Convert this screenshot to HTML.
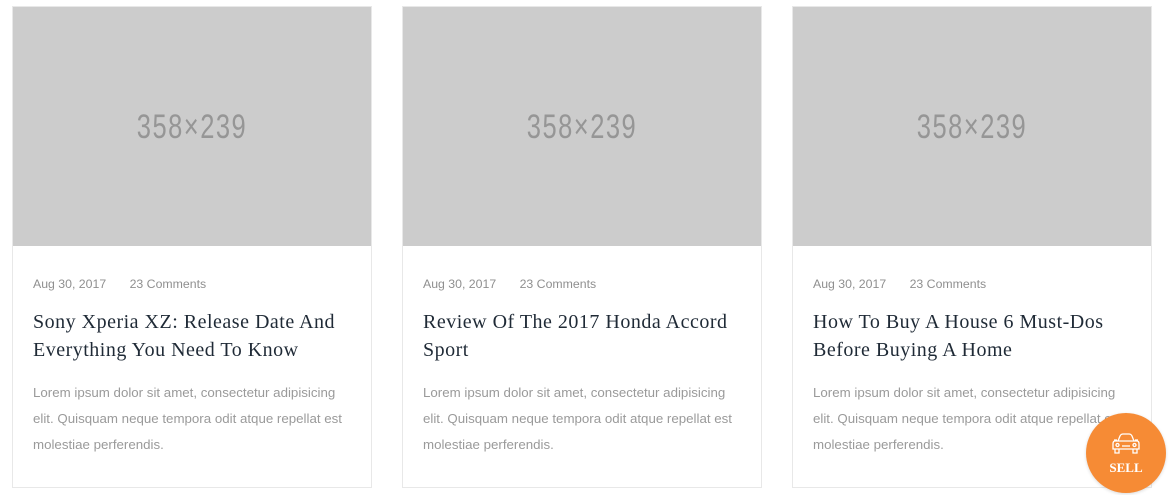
<!DOCTYPE html>
<html><head><meta charset="utf-8"><style>
body{margin:0;width:1170px;height:495px;background:#fff;position:relative;overflow:hidden;font-family:"Liberation Sans",sans-serif}
.card{position:absolute;top:6px;width:358px;height:480px;border:1px solid #e8e8e8;background:#fff}
.img{position:absolute;left:0;top:0;width:358px;height:239px;background:#cccccc}
.img span{position:absolute;left:0;right:0;top:100px;text-align:center;color:#969696;font-family:"Liberation Sans Narrow","Liberation Sans",sans-serif;font-size:34px;line-height:40px;transform:scaleX(0.75);letter-spacing:2px}
.meta{position:absolute;left:20px;top:270px;font-size:12.3px;color:#8f8f8f}
.meta span{margin-right:20px}
.title{position:absolute;left:20px;top:301px;width:330px;font-family:"Liberation Serif","DejaVu Serif",serif;font-size:20px;letter-spacing:0.5px;line-height:28px;color:#1f2a36}
.body{position:absolute;left:20px;top:373px;width:325px;font-size:13.3px;line-height:26px;color:#9a9a9a}
.sell{position:absolute;left:1086px;top:413px;width:80px;height:80px;border-radius:50%;background:#f68b35;color:#fff;text-align:center;box-shadow:0 1px 3px rgba(0,0,0,.15)}
.sell b{position:absolute;left:0;right:0;top:47px;font-family:"Liberation Serif",serif;font-size:13px}
</style></head><body>
<div class="card" style="left:12px"><div class="img"><span>358×239</span></div><div class="meta"><span>Aug 30, 2017</span> 23 Comments</div><div class="title">Sony Xperia XZ: Release Date And Everything You Need To Know</div><div class="body">Lorem ipsum dolor sit amet, consectetur adipisicing elit. Quisquam neque tempora odit atque repellat est molestiae perferendis.</div></div>
<div class="card" style="left:402px"><div class="img"><span>358×239</span></div><div class="meta"><span>Aug 30, 2017</span> 23 Comments</div><div class="title">Review Of The 2017 Honda Accord Sport</div><div class="body">Lorem ipsum dolor sit amet, consectetur adipisicing elit. Quisquam neque tempora odit atque repellat est molestiae perferendis.</div></div>
<div class="card" style="left:792px"><div class="img"><span>358×239</span></div><div class="meta"><span>Aug 30, 2017</span> 23 Comments</div><div class="title">How To Buy A House 6 Must-Dos Before Buying A Home</div><div class="body">Lorem ipsum dolor sit amet, consectetur adipisicing elit. Quisquam neque tempora odit atque repellat est molestiae perferendis.</div></div>
<div class="sell">
<svg style="position:absolute;left:25px;top:20px" width="30" height="22" viewBox="0 0 30 22" fill="none" stroke="#fff" stroke-width="1.3"><path d="M7 8 L9 3 Q10 1 12 1 H18 Q20 1 21 3 L23 8"/><path d="M4 8 H26 Q28 8 28 11 V16 H2 V11 Q2 8 4 8Z"/><path d="M4 16 V20 H8 V16 M22 16 V20 H26 V16"/><circle cx="6.5" cy="12" r="1.5"/><circle cx="23.5" cy="12" r="1.5"/><path d="M11 13 H19"/><path d="M3 7 H6 M24 7 H27"/></svg>
<b>SELL</b></div>
</body></html>
